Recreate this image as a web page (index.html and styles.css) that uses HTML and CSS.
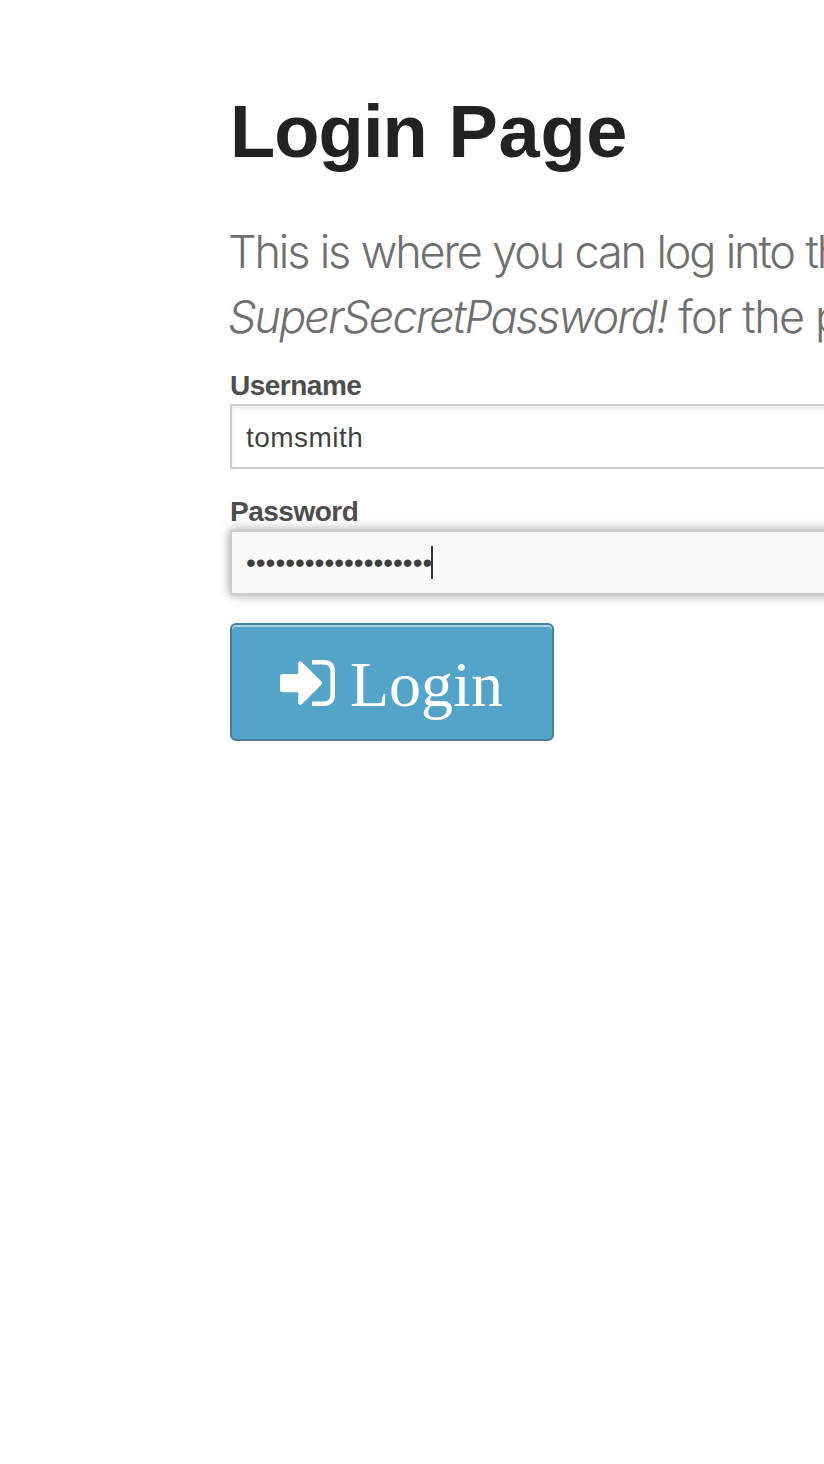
FILE: index.html
```html
<!DOCTYPE html>
<html lang="en">
<head>
<meta charset="utf-8">
<title>Login Page</title>
<link rel="stylesheet" href="styles.css">
</head>
<body>
<main class="page">
  <h2 class="title">Login <span class="title-end">Page</span></h2>
  <h4 class="subheader"><span class="intro">This is where you can log into th</span><br><em>SuperSecretPassword!</em><span class="rest"> for the p</span></h4>
  <form class="login">
    <div class="label user-label"><span>Username</span></div>
    <div class="field"><span class="value">tomsmith</span></div>
    <div class="label pass-label"><span>Password</span></div>
    <div class="field focused"><span class="dots">•••••••••••••••••••</span><span class="caret"></span></div>
    <button class="button" type="button">
      <svg class="icon" viewBox="0 0 56 48" width="56" height="48" aria-hidden="true">
        <path fill="#fff" d="M2.5 15H18.2V4.5Q18.2 2.2 20 2.2Q21 2.2 22 3.2L41 22Q43 24 41 26L22 45Q21 46 20 46Q18.200 45.500 18.200 43.500V33.200H2.500Q0 33.200 0 30.700V17.500Q0 15 2.500 15Z"/>
        <path fill="none" stroke="#fff" stroke-width="4.500" stroke-linecap="butt" d="M32 3.300H43.500Q52.700 3.300 52.700 12.500V35.500Q52.700 44.700 43.500 44.700H32"/>
      </svg>
      <span class="button-text">Login</span>
    </button>
  </form>
</main>
</body>
</html>
```
FILE: styles.css
```css
* { box-sizing: border-box; }
html, body { margin: 0; overflow: hidden; background: #fff; }
body { height: 1464px; font-family: "Liberation Sans", Arial, sans-serif; }
.page { width: 100%; padding: 80px 0 0 230px; overflow: hidden; }
.title { margin: 0; font-size: 74px; line-height: 104px; font-weight: 700; color: #222; letter-spacing: -0.9px; word-spacing: 2px; white-space: nowrap; }
.title-end { letter-spacing: 0.7px; }
.subheader { margin: 35px 0 0 -2px; font-family: Inter, "Liberation Sans", sans-serif; font-size: 45px; line-height: 65px; font-weight: 280; color: #6f6f6f; white-space: nowrap; }
.intro { letter-spacing: -2.15px; word-spacing: 1px; }
.subheader em { letter-spacing: -1.9px; }
.rest { letter-spacing: -1.6px; word-spacing: 0.5px; }
.login { margin: 0; width: 640px; }
.label { height: 42px; padding-top: 3px; line-height: 42px; font-size: 28px; font-weight: 700; color: #4d4d4d; letter-spacing: -0.5px; }
.user-label { margin-top: 13px; }
.pass-label { margin-top: 19px; }
.field { display: flex; align-items: center; height: 65px; padding: 0 14px; border: 2px solid #ccc; background: #fff; box-shadow: inset 0 2px 4px rgba(0,0,0,.1); font-size: 28px; color: rgba(0,0,0,.75); }
.value { padding-top: 2px; letter-spacing: 0.45px; }
.focused { background: #fafafa; box-shadow: 0 0 10px #999; }
.caret { width: 2px; height: 33px; background: #333; margin-left: -1px; }
.button { display: flex; align-items: center; width: 324px; height: 118px; margin: 28px 0 0; padding: 2px 0 0 48px; border: 2px solid #457f9d; border-radius: 6px; background: #54a3c8; box-shadow: inset 0 2px 0 rgba(255,255,255,.5); color: #fff; }
.icon { flex: none; }
.button-text { padding-top: 4px; font-family: "Liberation Serif", "Times New Roman", serif; font-size: 64px; line-height: 74px; margin-left: 14px; }
```
